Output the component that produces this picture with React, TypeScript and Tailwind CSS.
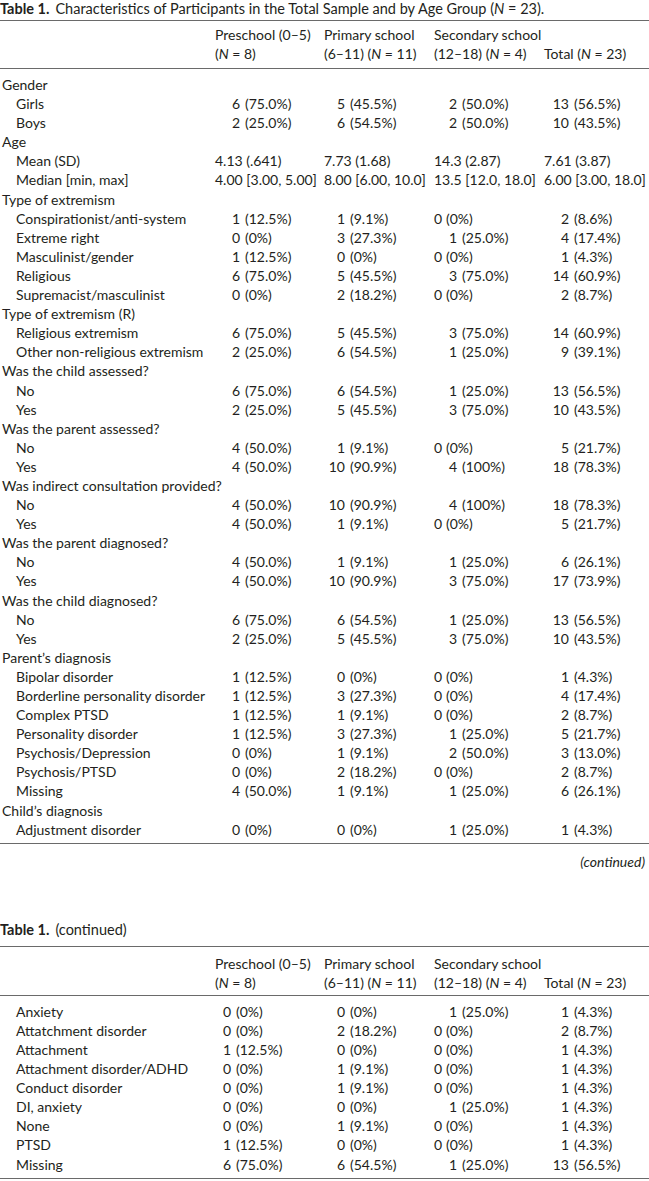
import React from "react";

type Cell = string | [string, string, number?];
type Row = { h?: string; l?: string; c?: Cell[] };

const T1: Row[] = [
  { h: "Gender" },
  { l: "Girls", c: [["6", "75.0%"], ["5", "45.5%"], ["2", "50.0%"], ["13", "56.5%"]] },
  { l: "Boys", c: [["2", "25.0%"], ["6", "54.5%"], ["2", "50.0%"], ["10", "43.5%"]] },
  { h: "Age" },
  { l: "Mean (SD)", c: ["4.13 (.641)", "7.73 (1.68)", "14.3 (2.87)", "7.61 (3.87)"] },
  { l: "Median [min, max]", c: ["4.00 [3.00, 5.00]", "8.00 [6.00, 10.0]", "13.5 [12.0, 18.0]", "6.00 [3.00, 18.0]"] },
  { h: "Type of extremism" },
  { l: "Conspirationist/anti-system", c: [["1", "12.5%"], ["1", "9.1%"], ["0", "0%", 1], ["2", "8.6%"]] },
  { l: "Extreme right", c: [["0", "0%"], ["3", "27.3%"], ["1", "25.0%"], ["4", "17.4%"]] },
  { l: "Masculinist/gender", c: [["1", "12.5%"], ["0", "0%"], ["0", "0%", 1], ["1", "4.3%"]] },
  { l: "Religious", c: [["6", "75.0%"], ["5", "45.5%"], ["3", "75.0%"], ["14", "60.9%"]] },
  { l: "Supremacist/masculinist", c: [["0", "0%"], ["2", "18.2%"], ["0", "0%", 1], ["2", "8.7%"]] },
  { h: "Type of extremism (R)" },
  { l: "Religious extremism", c: [["6", "75.0%"], ["5", "45.5%"], ["3", "75.0%"], ["14", "60.9%"]] },
  { l: "Other non-religious extremism", c: [["2", "25.0%"], ["6", "54.5%"], ["1", "25.0%"], ["9", "39.1%"]] },
  { h: "Was the child assessed?" },
  { l: "No", c: [["6", "75.0%"], ["6", "54.5%"], ["1", "25.0%"], ["13", "56.5%"]] },
  { l: "Yes", c: [["2", "25.0%"], ["5", "45.5%"], ["3", "75.0%"], ["10", "43.5%"]] },
  { h: "Was the parent assessed?" },
  { l: "No", c: [["4", "50.0%"], ["1", "9.1%"], ["0", "0%", 1], ["5", "21.7%"]] },
  { l: "Yes", c: [["4", "50.0%"], ["10", "90.9%"], ["4", "100%"], ["18", "78.3%"]] },
  { h: "Was indirect consultation provided?" },
  { l: "No", c: [["4", "50.0%"], ["10", "90.9%"], ["4", "100%"], ["18", "78.3%"]] },
  { l: "Yes", c: [["4", "50.0%"], ["1", "9.1%"], ["0", "0%", 1], ["5", "21.7%"]] },
  { h: "Was the parent diagnosed?" },
  { l: "No", c: [["4", "50.0%"], ["1", "9.1%"], ["1", "25.0%"], ["6", "26.1%"]] },
  { l: "Yes", c: [["4", "50.0%"], ["10", "90.9%"], ["3", "75.0%"], ["17", "73.9%"]] },
  { h: "Was the child diagnosed?" },
  { l: "No", c: [["6", "75.0%"], ["6", "54.5%"], ["1", "25.0%"], ["13", "56.5%"]] },
  { l: "Yes", c: [["2", "25.0%"], ["5", "45.5%"], ["3", "75.0%"], ["10", "43.5%"]] },
  { h: "Parent\u2019s diagnosis" },
  { l: "Bipolar disorder", c: [["1", "12.5%"], ["0", "0%"], ["0", "0%", 1], ["1", "4.3%"]] },
  { l: "Borderline personality disorder", c: [["1", "12.5%"], ["3", "27.3%"], ["0", "0%", 1], ["4", "17.4%"]] },
  { l: "Complex PTSD", c: [["1", "12.5%"], ["1", "9.1%"], ["0", "0%", 1], ["2", "8.7%"]] },
  { l: "Personality disorder", c: [["1", "12.5%"], ["3", "27.3%"], ["1", "25.0%"], ["5", "21.7%"]] },
  { l: "Psychosis/Depression", c: [["0", "0%"], ["1", "9.1%"], ["2", "50.0%"], ["3", "13.0%"]] },
  { l: "Psychosis/PTSD", c: [["0", "0%"], ["2", "18.2%"], ["0", "0%", 1], ["2", "8.7%"]] },
  { l: "Missing", c: [["4", "50.0%"], ["1", "9.1%"], ["1", "25.0%"], ["6", "26.1%"]] },
  { h: "Child\u2019s diagnosis" },
  { l: "Adjustment disorder", c: [["0", "0%"], ["0", "0%"], ["1", "25.0%"], ["1", "4.3%"]] },
];

const T2: Row[] = [
  { l: "Anxiety", c: [["0", "0%"], ["0", "0%"], ["1", "25.0%"], ["1", "4.3%"]] },
  { l: "Attatchment disorder", c: [["0", "0%"], ["2", "18.2%"], ["0", "0%", 1], ["2", "8.7%"]] },
  { l: "Attachment", c: [["1", "12.5%"], ["0", "0%"], ["0", "0%", 1], ["1", "4.3%"]] },
  { l: "Attachment disorder/ADHD", c: [["0", "0%"], ["1", "9.1%"], ["0", "0%", 1], ["1", "4.3%"]] },
  { l: "Conduct disorder", c: [["0", "0%"], ["1", "9.1%"], ["0", "0%", 1], ["1", "4.3%"]] },
  { l: "DI, anxiety", c: [["0", "0%"], ["0", "0%"], ["1", "25.0%"], ["1", "4.3%"]] },
  { l: "None", c: [["0", "0%"], ["1", "9.1%"], ["0", "0%", 1], ["1", "4.3%"]] },
  { l: "PTSD", c: [["1", "12.5%"], ["0", "0%"], ["0", "0%", 1], ["1", "4.3%"]] },
  { l: "Missing", c: [["6", "75.0%"], ["6", "54.5%"], ["1", "25.0%"], ["13", "56.5%"]] },
];

// width of right-aligned count box per column (table 1 / table 2)
const CW1 = ["w-[25px]", "w-[21px]", "w-[23px]", "w-[25px]"];
const CW2 = ["w-[16px]", "w-[21px]", "w-[23px]", "w-[25px]"];

const GRID = "grid grid-cols-[215px_109px_110px_110px_1fr]";

function CellView({ cell, cw }: { cell: Cell; cw: string }) {
  if (typeof cell === "string") {
    return <div className="whitespace-nowrap">{cell}</div>;
  }
  const [n, p, flush] = cell;
  return (
    <div className="flex whitespace-nowrap">
      <span className={flush ? "w-[7px] text-right" : cw + " text-right"}>{n}</span>
      <span className="ml-[5px]">({p})</span>
    </div>
  );
}

function Body({ rows, cws }: { rows: Row[]; cws: string[] }) {
  return (
    <>
      {rows.map((r, i) => (
        <div key={i} className={GRID + " h-[19.1px] items-center"}>
          {r.h ? (
            <div className="pl-[2px] whitespace-nowrap col-span-5">{r.h}</div>
          ) : (
            <>
              <div className="pl-[16px] whitespace-nowrap">{r.l}</div>
              {r.c!.map((c, j) => (
                <CellView key={j} cell={c} cw={cws[j]} />
              ))}
              <div />
            </>
          )}
        </div>
      ))}
    </>
  );
}

function Header({ pt, pb }: { pt: string; pb: string }) {
  return (
    <div className={GRID + " leading-[19px] " + pt + " " + pb}>
      <div />
      <div className="whitespace-nowrap">
        <div>Preschool (0–5)</div>
        <div>
          (<i>N</i> = 8)
        </div>
      </div>
      <div className="whitespace-nowrap">
        <div>Primary school</div>
        <div>
          (6–11) (<i>N</i> = 11)
        </div>
      </div>
      <div className="whitespace-nowrap">
        <div>Secondary school</div>
        <div>
          (12–18) (<i>N</i> = 4)
        </div>
      </div>
      <div className="whitespace-nowrap flex flex-col justify-end">
        <div>
          Total (<i>N</i> = 23)
        </div>
      </div>
    </div>
  );
}

function Rule() {
  return <div className="h-px bg-[#6a6a6a]" />;
}

export default function App() {
  return (
    <div className="w-[649px] h-[1181px] overflow-hidden bg-white text-[#231f20] text-[14px] font-[Lato,sans-serif]">
      {/* Table 1 */}
      <div className="h-[20px] leading-[17px] text-[14.5px] whitespace-nowrap">
        <span className="font-bold">Table 1.</span>
        <span className="ml-[6px]">
          Characteristics of Participants in the Total Sample and by Age Group (<i>N</i> = 23).
        </span>
      </div>
      <Rule />
      <Header pt="pt-[4px]" pb="pb-[5px]" />
      <Rule />
      <div className="pt-[5px] pb-[5px]">
        <Body rows={T1} cws={CW1} />
      </div>
      <Rule />
      <div className="pt-[9px] leading-[18px] text-right pr-[4px] italic">(continued)</div>

      {/* Table 2 */}
      <div className="mt-[50px] h-[25px] leading-[18px] text-[14.5px] whitespace-nowrap">
        <span className="font-bold">Table 1.</span>
        <span className="ml-[6px]">(continued)</span>
      </div>
      <Rule />
      <Header pt="pt-[7px]" pb="pb-[3px]" />
      <Rule />
      <div className="pt-[5px] pb-[5px]">
        <Body rows={T2} cws={CW2} />
      </div>
      <Rule />
    </div>
  );
}
